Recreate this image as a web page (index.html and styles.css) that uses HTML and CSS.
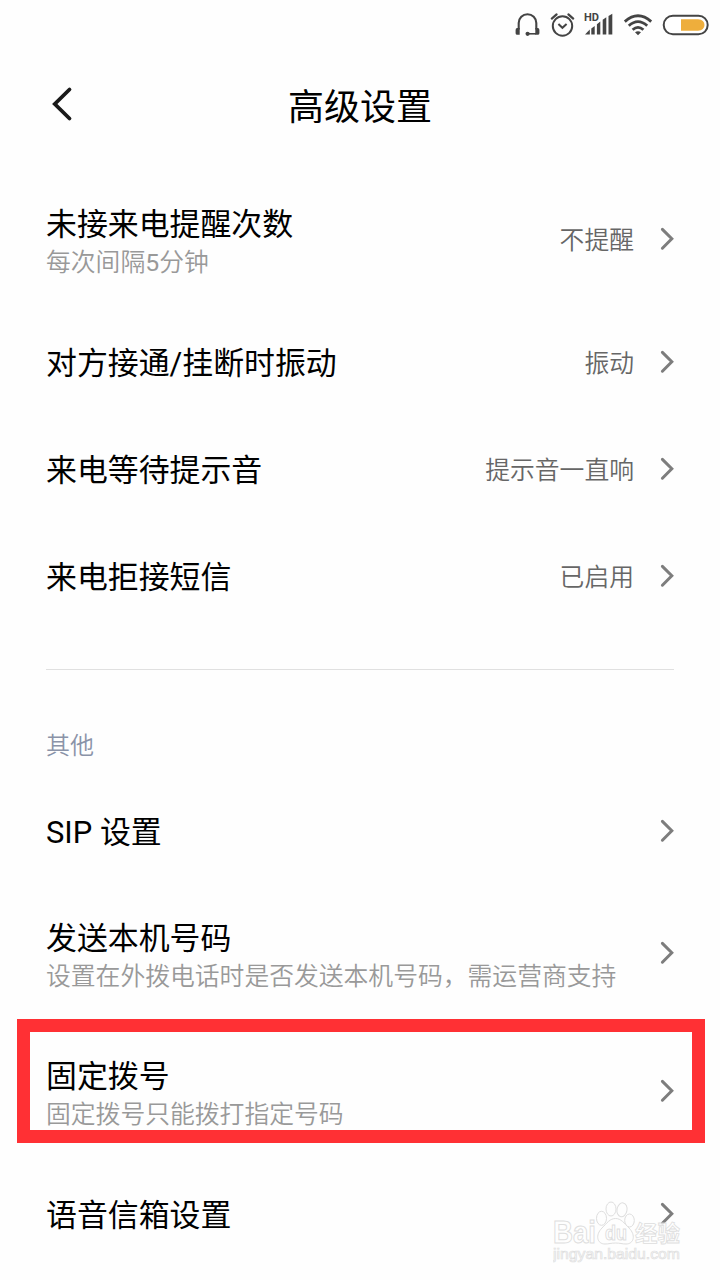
FILE: index.html
```html
<!DOCTYPE html>
<html lang="zh-CN">
<head>
  <meta charset="UTF-8" />
  <meta name="viewport" content="width=device-width, initial-scale=1" />
  <title>高级设置</title>
  <link rel="stylesheet" href="styles.css">
</head>
<body>
  <svg class="defs" width="0" height="0">
    <symbol id="arrow" viewBox="0 0 16 26">
      <path d="M3.4 3.4 L12.8 12.8 L3.4 22.2" fill="none" stroke="#7d7d7d" stroke-width="3" stroke-linecap="round" />
    </symbol>
  </svg>

  <!-- Barra de estado -->
  <div class="status-bar">
    <svg width="26" height="26" viewBox="0 0 26 26">
      <path d="M4.7 17.5 V11 A8.8 8.8 0 0 1 22.3 11 V17.5" fill="none" stroke="#444" stroke-width="2.1" />
      <path d="M1.6 18 Q1.6 16 3.2 16 H5.7 V22.8 H3.2 Q1.6 22.8 1.6 21.3 Z M25.4 18 Q25.4 16 23.8 16 H21.3 V22.8 H23.8 Q25.4 22.8 25.4 21.3 Z" fill="#444" />
      <path d="M13 21.8 H22" stroke="#444" stroke-width="1.6" />
      <circle cx="13.6" cy="21.8" r="2.1" fill="#444" />
    </svg>
    <svg width="26" height="26" viewBox="0 0 26 26">
      <circle cx="13.5" cy="14" r="9.7" fill="none" stroke="#444" stroke-width="2" />
      <path d="M2.8 6.6 L7.6 2.4 M24.2 6.6 L19.4 2.4" stroke="#444" stroke-width="2.2" stroke-linecap="round" />
      <path d="M9.4 12 L13.4 15.8 L17.6 12" fill="none" stroke="#444" stroke-width="2" />
    </svg>
    <svg width="30" height="26" viewBox="0 0 30 26">
      <text x="0" y="9.4" class="hd" textLength="15" lengthAdjust="spacingAndGlyphs">HD</text>
      <path d="M1 22.5 L5.8 17.6 V22.5 Z" fill="#444" />
      <path d="M7.3 22.5 V16.4 L10.7 13.9 V22.5 Z M12.9 22.5 V12.3 L16.3 9.5 V22.5 Z M18.7 22.5 V7.7 L22.3 5.2 V22.5 Z M24.5 22.5 V4 L28.3 1.8 V22.5 Z" fill="#444" />
    </svg>
    <svg width="30" height="26" viewBox="0 0 30 26">
      <path d="M1.8 9.6 Q15 -2.2 28.2 9.6 M5.8 13.8 Q15 5.4 24.2 13.8 M9.6 17.8 Q15 13 20.4 17.8" fill="none" stroke="#444" stroke-width="2.8" />
      <path d="M12 20.3 Q15 18 18 20.3 L15 23.2 Z" fill="#444" />
    </svg>
    <svg width="48" height="26" viewBox="0 0 48 26">
      <rect x="1.7" y="3.7" width="44" height="18.6" rx="9.2" fill="#fff" stroke="#444" stroke-width="2" />
      <path d="M19 7.2 H36 Q42.500 7.8 42.500 13 Q42.500 18.3 36 18.8 H19 Z" fill="#eeae3c" />
    </svg>
  </div>

  <div class="header">
    <svg class="back" width="24" height="40" viewBox="0 0 24 40">
      <path d="M19.5 5.5 L4.8 20 L19.5 34.5" fill="none" stroke="#1a1a1a" stroke-width="3.8" stroke-linecap="round" />
    </svg>
    <h1>高级设置</h1>
  </div>

  <!-- Lista de ajustes -->
  <div class="list">
    <div class="row row-double">
      <div class="text">
        <div class="name">未接来电提醒次数</div>
        <div class="desc">每次间隔<span class="num">5</span>分钟</div>
      </div>
      <div class="value">不提醒</div>
      <svg class="arrow"><use href="#arrow" /></svg>
    </div>
    <div class="row">
      <div class="name">对方接通/挂断时振动</div>
      <div class="value">振动</div>
      <svg class="arrow"><use href="#arrow" /></svg>
    </div>
    <div class="row">
      <div class="name">来电等待提示音</div>
      <div class="value">提示音一直响</div>
      <svg class="arrow"><use href="#arrow" /></svg>
    </div>
    <div class="row">
      <div class="name">来电拒接短信</div>
      <div class="value">已启用</div>
      <svg class="arrow"><use href="#arrow" /></svg>
    </div>
  </div>

  <div class="section">其他</div>

  <div class="list">
    <div class="row">
      <div class="name">SIP 设置</div>
      <svg class="arrow"><use href="#arrow" /></svg>
    </div>
    <div class="row row-double">
      <div class="text">
        <div class="name">发送本机号码</div>
        <div class="desc">设置在外拨电话时是否发送本机号码，需运营商支持</div>
      </div>
      <svg class="arrow"><use href="#arrow" /></svg>
    </div>
    <div class="row row-double marked">
      <div class="text">
        <div class="name">固定拨号</div>
        <div class="desc">固定拨号只能拨打指定号码</div>
      </div>
      <svg class="arrow"><use href="#arrow" /></svg>
    </div>
    <div class="row">
      <div class="name">语音信箱设置</div>
      <svg class="arrow"><use href="#arrow" /></svg>
    </div>
  </div>

  <!-- Marca de agua -->
  <svg class="watermark" width="140" height="70" viewBox="0 0 140 70">
    <g fill="#fff" stroke="#d9d9d9" stroke-width="1">
      <text x="0" y="42.5" class="wm-logo" textLength="43" lengthAdjust="spacingAndGlyphs">Bai</text>
      <ellipse cx="48.5" cy="18.3" rx="5" ry="7" />
      <ellipse cx="58" cy="9" rx="5" ry="7" />
      <ellipse cx="69" cy="9.8" rx="5" ry="7" transform="rotate(10 69 9.8)" />
      <ellipse cx="76.5" cy="20.5" rx="4.8" ry="6.5" />
      <path d="M62.5 18.500 C68 18.500 71 23 76 28 C83 35 81 44 73 44 C69 44 67 43 62.5 43 C58 43 56 44 52 44 C44 44 42 35 49 28 C54 23 57 18.500 62.5 18.500 Z" />
      <text x="52" y="40" class="wm-du" textLength="22" lengthAdjust="spacingAndGlyphs">du</text>
      <text x="82" y="41" class="wm-cn" textLength="45" lengthAdjust="spacingAndGlyphs">经验</text>
      <text x="0" y="59" class="wm-url" textLength="127" lengthAdjust="spacingAndGlyphs">jingyan.baidu.com</text>
    </g>
  </svg>
</body>
</html>
```
FILE: styles.css
```css
body {
  font-family: Roboto, "Noto Sans CJK SC", sans-serif;
  background-color: #fefefe;
  color: #000;
  margin: 0;
  height: 1280px;
  position: relative;
  overflow: hidden;
}

.defs {
  position: absolute;
}

.status-bar {
  display: flex;
  justify-content: flex-end;
  gap: 9px;
  height: 38px;
  padding: 12px 10px 0 0;
  box-sizing: border-box;
}

.hd {
  font-size: 10px;
  font-weight: bold;
  fill: #444;
}

.header {
  display: flex;
  align-items: center;
  height: 132px;
  padding: 0 50px;
}

.back {
  width: 24px;
}

h1 {
  flex: 1;
  margin: 0 24px 0 0;
  padding-top: 8px;
  font-size: 36px;
  font-weight: 400;
  line-height: 48px;
  text-align: center;
}

.list {
  padding: 0 45px 0 46px;
}

.row {
  display: flex;
  align-items: center;
  height: 107px;
  position: relative;
}

.row-double {
  height: 138px;
}

.name {
  flex: 1;
  padding-top: 5px;
  font-size: 30.9px;
  line-height: 40px;
  white-space: nowrap;
}

.text {
  flex: 1;
  padding-top: 5px;
}

.text .name {
  padding-top: 3px;
}

.desc {
  font-size: 24.8px;
  line-height: 36px;
  color: #999;
  font-weight: 350;
  white-space: nowrap;
}

.num {
  font-weight: 400;
}

.value {
  padding-top: 4px;
  font-size: 24.8px;
  line-height: 36px;
  color: #666;
  font-weight: 350;
}

.arrow {
  width: 16px;
  height: 26px;
  margin-left: 25px;
}

.section {
  margin: 40px 46px 0;
  padding-top: 58px;
  height: 49px;
  border-top: 1px solid #e0e0e0;
  font-size: 24px;
  line-height: 36px;
  font-weight: 350;
  color: #8a93a8;
}

/* recuadro rojo sobre la fila */
.marked::before {
  content: "";
  position: absolute;
  left: -29px;
  right: -30px;
  top: -3px;
  height: 98px;
  border: 13px solid #ff3034;
}

.watermark {
  position: absolute;
  left: 553px;
  top: 1200px;
  opacity: 0.85;
}

.wm-logo {
  font: bold 31px "Liberation Sans", sans-serif;
}

.wm-du {
  font: bold 20px "Liberation Sans", sans-serif;
}

.wm-cn {
  font: bold 22px "Noto Sans CJK SC", sans-serif;
  stroke-width: 0.8px;
}

.wm-url {
  font: 15px "Liberation Sans", sans-serif;
  stroke-width: 0.7px;
}
```
